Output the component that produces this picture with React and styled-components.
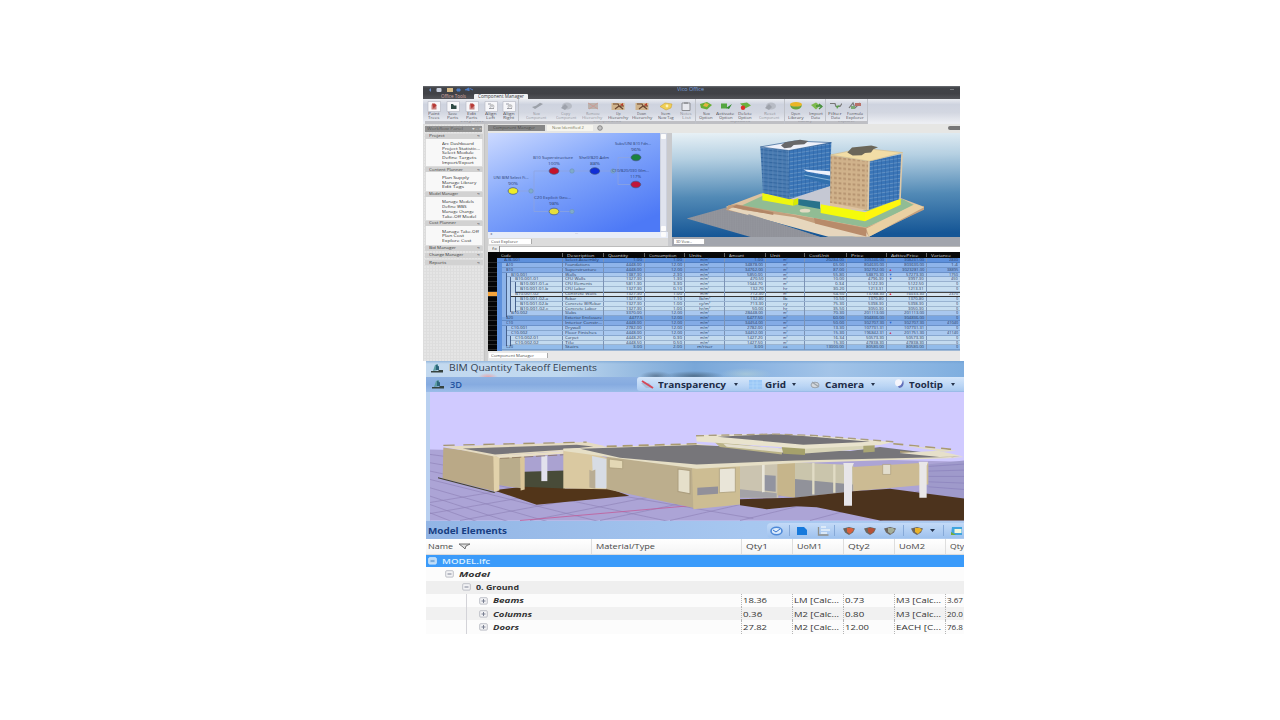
import React, { useLayoutEffect, useRef } from "react";
import styled, { createGlobalStyle } from "styled-components";

const Global = createGlobalStyle`
  * { box-sizing: border-box; }
  body { margin: 0; background: #fff; overflow: hidden; font-family: "Open Sans", "Liberation Sans", sans-serif; }
  svg { display: block; flex: none; }
`;

const Page = styled.main`
  width: 1280px; height: 720px; padding: 86px 0 0 423px;
  display: flex; flex-direction: column; align-items: flex-start;
`;

/* ---------- text squeezed or stretched to a given width ---------- */
const FitBox = styled.span`
  display: block; flex: none; width: ${(p) => p.$w}px; height: ${(p) => p.$s * 1.1}px;
  line-height: ${(p) => p.$s * 1.1}px; font-size: ${(p) => p.$s}px; overflow: visible;
  color: ${(p) => p.$c || "inherit"}; font-weight: ${(p) => p.$b || 400};
  font-style: ${(p) => (p.$i ? "italic" : "normal")};
  > span { display: inline-block; white-space: pre; transform-origin: 0 50%; }
`;
function Fit({ w, s, c, b, i, children }) {
  const ref = useRef(null);
  useLayoutEffect(() => {
    const el = ref.current;
    const natural = el.getBoundingClientRect().width;
    if (natural && !el.style.transform) el.style.transform = `scaleX(${w / natural})`;
  }, [w, s, children]);
  return <FitBox $w={w} $s={s} $c={c} $b={b} $i={i}><span ref={ref}>{children}</span></FitBox>;
}

/* ---------- office window ---------- */
const OfficeWindow = styled.section`
  width: 537px; height: 274.5px; background: #dedede; display: flex; flex-direction: column; overflow: hidden;
`;
const OfficeTitle = styled.header`
  height: 13px; flex: none; display: flex; align-items: flex-start; position: relative;
  background: linear-gradient(#6d7075 0, #414348 14%, #404146 60%, #525358);
  color: #7d93b8;
`;
const QuickIcons = styled.div`
  width: 254px; padding: 0.5px 0 0 5px;
`;
const AppTabs = styled.nav`
  position: absolute; left: 0; bottom: 0; display: flex; align-items: center; height: 5.5px; padding-left: 18px;
`;
const ActiveAppTab = styled.div`
  margin-left: 8px; width: 54px; height: 5.5px; padding-left: 4px; background: #f1f2f4; border-radius: 1px 1px 0 0;
  display: flex; align-items: center;
`;
const TitleMid = styled.div` padding-top: 1px; `;
const TitleMin = styled.div` margin: 3px 6px 0 auto; width: 4px; height: 1px; background: #77797e; `;

const Ribbon = styled.div`
  height: 24.5px; flex: none; display: flex; padding-left: 2px;
  background: linear-gradient(#e9ebf0 0, #ced3df 22%, #d3d7e1 55%, #eceef3 95%);
`;
const RibbonGroup = styled.div`
  width: ${(p) => p.$w}px; display: flex; flex-direction: column; border-right: 1px solid #bfc2c9;
`;
const RibbonItems = styled.div` flex: 1; display: flex; padding-top: 1.5px; `;
const RibbonCaption = styled.div`
  height: 3.5px; background: #bebfc4; display: flex; align-items: center; justify-content: center; overflow: hidden;
`;
const Tool = styled.div`
  width: ${(p) => p.$w}px; flex: none; display: flex; flex-direction: column; align-items: center;
  opacity: ${(p) => (p.$dim ? 0.55 : 1)}; color: #55555b;
  > svg { margin-bottom: 0.3px; }
`;

const OfficeBody = styled.div` flex: 1; display: flex; min-height: 0; `;
const Side = styled.aside`
  width: 62px; flex: none; padding: 2.5px 1px 0 1.5px;
  background-color: #e5e5e5;
  background-image: linear-gradient(90deg, #dddddd 1px, transparent 1px), linear-gradient(#dedede 1px, transparent 1px);
  background-size: 3px 3px; border-right: 1px solid #c4c4c4;
`;
const SideTop = styled.div`
  height: 6px; margin: 0 1px 1.5px 0; background: #929292; display: flex; align-items: center; padding-left: 2px; justify-content: space-between;
`;
const SideSection = styled.div` margin-bottom: ${(p) => (p.$closed ? 2.2 : 0.2)}px; `;
const SideHead = styled.div`
  height: 5px; background: #d2d2d2; display: flex; align-items: center; justify-content: space-between; padding: 0 3px 0 4px; color: #404040;
`;
const SideList = styled.div`
  height: ${(p) => p.$h}px; background: #f8f8f8; padding: 2.4px 0 0 16px; border: 1px solid #dcdcdc; border-top: 0;
`;
const SideItem = styled.div` height: 4.75px; display: flex; align-items: center; color: #2e2e2e; `;

const Main = styled.div` flex: 1; min-width: 0; display: flex; flex-direction: column; padding-left: 3px; background: #cfcfcf; `;
const DocTabs = styled.div` height: 9px; flex: none; display: flex; align-items: center; gap: 2px; background: #e6e6e4; padding-left: 0; `;
const DocTab = styled.div`
  width: ${(p) => p.$w}px; height: 5.5px; padding-left: 5px; display: flex; align-items: center;
  background: ${(p) => (p.$on ? "#f6f5ee" : "#868686")};
`;
const DocEnd = styled.div` margin-left: auto; width: 12px; height: 4px; background: #777; border-radius: 3px 0 0 3px; `;
const Views = styled.div` height: 113px; flex: none; display: flex; gap: 4px; background: #c9cacd; `;
const View = styled.div` width: ${(p) => p.$w}px; display: flex; flex-direction: column; flex: none; `;
const GraphRow = styled.div` display: flex; height: 99px; `;
const VBar = styled.div`
  width: 7px; display: flex; flex-direction: column; justify-content: space-between; align-items: center;
  background: #dfe3ed; border: 1px solid #cdd2de;
`;
const HBar = styled.div` height: 6px; display: flex; justify-content: space-between; align-items: center; background: #e7ecf8; padding: 0 2px; color: #7783a0; `;
const Thumb = styled.i` width: 5px; height: 5px; background: #fcfcfc; border-radius: 1px; `;
const Foot = styled.div` flex: 1; background: ${(p) => p.$bg}; display: flex; align-items: center; padding-left: ${(p) => p.$pl || 1}px; `;
const FootTab = styled.div`
  width: ${(p) => p.$w}px; height: 5.5px; background: #fff; display: flex; align-items: center; padding-left: 2px; border-right: 1px solid #aaa; color: #4b4b4b;
`;
const Formula = styled.div`
  height: 6.7px; flex: none; display: flex; background: #bcbcbc; color: #555; align-items: stretch;
`;
const FormulaFx = styled.div` width: 12px; background: #ececec; padding-left: 4px; border-right: 1px solid #888; `;
const FormulaInput = styled.div` flex: 1; margin-top: 1px; background: #fff; `;

const colTemplate = "66px 41px 41px 40px 40px 41px 39px 42px 40px 40px 34px";
const Sheet = styled.div` display: flex; flex: none; height: 98.4px; background: #9fb8d4; overflow: hidden; `;
const Gutter = styled.div` width: 9px; flex: none; padding-top: 5.8px; background: #050505; `;
const GutterCell = styled.div` height: 4.87px; background: ${(p) => (p.$on ? "#f3a43d" : "#050505")}; border-bottom: 1px solid #2a2a2a; `;
const SheetBody = styled.div` width: 464px; flex: none; `;
const SheetHead = styled.div`
  height: 5.8px; display: grid; grid-template-columns: ${colTemplate}; align-items: center; background: #080808; color: #d8d8d8;
`;
const HeadCell = styled.div` height: 4px; padding-left: 4px; border-right: 1px solid #666; display: flex; align-items: center; `;
const Line = styled.div`
  height: 4.87px; display: grid; grid-template-columns: ${colTemplate}; background: ${(p) => p.$bg};
  border-bottom: 1px solid ${(p) => (p.$sel ? "#333" : "#24447440")};
  box-shadow: ${(p) => (p.$sel ? "inset 0 1px #444" : "none")}; color: #2b3b5c;
`;
const CodeCell = styled.div` display: flex; border-right: 1px solid #6f87aa; `;
const Indent = styled.i` width: 4.8px; flex: none; margin-bottom: -1px; background: ${(p) => p.$bg}; border-right: 1px solid ${(p) => (p.$edge ? "#46618d" : "transparent")}; `;
const CodeInner = styled.div` flex: 1; display: flex; align-items: center; padding-left: ${(p) => p.$pl}px; `;
const Cell = styled.div`
  display: flex; align-items: center; border-right: 1px solid #7c93b5; padding: 0 2px;
  justify-content: ${(p) => p.$a || "flex-end"};
`;
const OfficeFoot = styled.div` flex: 1; display: flex; align-items: center; background: #e8e8e8; padding-left: 1px; `;

/* ---------- takeoff window ---------- */
const Takeoff = styled.section`
  width: 538px; height: 273.5px; margin-left: 3px; display: flex; flex-direction: column; background: #fbfbfb; overflow: hidden;
`;
const TakeTitle = styled.header`
  height: 16px; flex: none; display: flex; align-items: center; padding-left: 5px; gap: 6px; color: #33404f;
  background:
    linear-gradient(#6b9acd88, transparent 18%),
    radial-gradient(ellipse 16px 5px at 230px 15px, #5b7590dd, transparent),
    radial-gradient(ellipse 30px 5px at 268px 15px, #4d6983dd, transparent),
    radial-gradient(ellipse 26px 6px at 320px 13px, #b3cfd8aa, transparent),
    radial-gradient(ellipse 10px 4px at 62px 16px, #f09a9acc, transparent),
    linear-gradient(90deg, #c3d9ef 0, #bfd8ef 25%, #8eb5de 42%, #79a7d8 50%, #8db5e2 62%, #a3c4e8 75%, #7faedf 100%);
`;
const TakeTools = styled.div`
  height: 15.5px; flex: none; display: flex; align-items: center; padding-left: 6px; gap: 6px; color: #15305c;
  background: linear-gradient(#8fb2e2, #86abe0 50%, #9cbde9);
`;
const ToolStrip = styled.div`
  margin-left: auto; width: 327px; height: 14px; display: flex; align-items: center; padding-left: 4px;
  background: linear-gradient(#d5e6fa, #bcd6f5 60%, #a9c9ef); border-radius: 3px 0 0 3px;
`;
const ToolEntry = styled.div` display: flex; align-items: center; width: ${(p) => p.$w}px; flex: none; gap: ${(p) => p.$g}px; `;
const ToolSep = styled.i` width: 1px; height: 12px; background: #98b8df; margin-right: 3px; margin-left: 4px; `;
const Caret = styled.i`
  width: 0; height: 0; border: 2.5px solid transparent; border-top: 3px solid #26344c; border-bottom: 0; margin-left: ${(p) => p.$m || 0}px;
`;
const Scene = styled.div` height: 129px; flex: none; padding-left: 4px; background: #b9d0f0; `;
const ModelBar = styled.div`
  height: 17.5px; flex: none; display: flex; align-items: center; justify-content: space-between; padding: 1px 0 0 2px;
  background: linear-gradient(90deg, #92b5e5, #a7c7f0 60%, #aecbf0);
`;
const IconStrip = styled.div` width: 197px; height: 15px; background: linear-gradient(#c3daf7, #9fc2ee); border-radius: 4px 0 0 4px; `;
const treeCols = "165px 150px 51px 51px 51px 51px 19px";
const TreeHead = styled.div`
  height: 16px; flex: none; display: grid; grid-template-columns: ${treeCols}; background: linear-gradient(#fff, #f4f4f4); border-bottom: 1px solid #dcdcdc; color: #474747;
`;
const TreeHeadCell = styled.div`
  display: flex; align-items: center; gap: 5px; padding: 1.5px 0 0 ${(p) => p.$p ?? 4}px; border-left: ${(p) => (p.$p ? 0 : 1)}px solid #dedede;
`;
const TreeRow = styled.div`
  height: ${(p) => p.$h || 13.3}px; flex: none; display: grid; grid-template-columns: ${treeCols};
  background: ${(p) => p.$bg}; color: ${(p) => (p.$on ? "#d9efff" : "#333")};
`;
const TreeName = styled.div` display: flex; align-items: center; padding-left: ${(p) => p.$in}px; gap: ${(p) => p.$g ?? 6}px; `;
const TreeCell = styled.div` display: flex; align-items: center; border-left: 1px dotted #b5b5b5; padding-left: 1px; `;
const Branch = styled.i` height: 100%; width: 13px; flex: none; border-left: 1px solid #d3d3d8; `;
const NameGap = styled.i` width: 5px; flex: none; `;

/* ---------- data ---------- */
const groups = [
  { w: 94, cap: 24, items: [["Paint", "Trees", 18, "doc"], ["Save", "Parts", 19, "doc2"], ["Edit", "Parts", 19, "doc"], ["Align", "Left", 19, "doc3"], ["Align", "Right", 18, "doc3"]] },
  { w: 177, cap: 28, items: [["New", "Component", 35, "pen", 1], ["Copy", "Component", 24, "copy", 1], ["Remove", "Hierarchy", 29, "box", 1], ["Up", "Hierarchy", 22, "hier"], ["Down", "Hierarchy", 26, "hier"], ["Item", "New Tag", 22, "tag"], ["Notes", "List", 18, "clip", 1]] },
  { w: 89, cap: 20, items: [["New", "Option", 20, "gnew"], ["Activate", "Option", 19, "gact"], ["Delete", "Option", 20, "gdel"], ["Reset", "Component", 29, "copy", 1]] },
  { w: 41, cap: 14, items: [["Open", "Library", 21, "lib"], ["Import", "Data", 19, "imp"]] },
  { w: 42, cap: 17, items: [["Filter", "Data", 18, "fil"], ["Formula", "Explorer", 22, "form"]] },
];
const sections = [
  ["Project", 28.7, ["Arc Dashboard", "Project Statistic...", "Select Module", "Define Targets", "Import/Export"]],
  ["Content Planner", 19.5, ["Plan Supply", "Manage Library", "Edit Tags"]],
  ["Model Manager", 24, ["Manage Models", "Define WBS", "Manage Change", "Take-Off Model"]],
  ["Cost Planner", 19.5, ["Manage Take-Off", "Plan Cost", "Explore Cost"]],
];
const heads = ["Code", "Description", "Quantity", "Consumption", "Units", "Amount", "Unit", "CostUnit", "Price", "AdtivePrice", "Variance"];
const rows = [
  [0, "A-B-001", "Select Assembly", "1.00", "1.00", "m/m²", "1.00", "m²", "20284.00", "309246.00", "308231.00", "2830", "#5d90dc"],
  [1, "A10", "Foundations", "4448.00", "12.00", "m/m²", "34878.00", "m²", "65.00", "804630.00", "803630.00", "1.4", "#8eb4ea"],
  [1, "B10", "Superstructure", "4448.00", "12.00", "m/m²", "34762.00", "m²", "87.00", "302702.00", "3023281.00", "38895", "#83abe6"],
  [2, "B10.001", "Walls", "1387.30", "2.30", "m/m²", "5850.00", "m²", "55.80", "58870.30", "57273.30", "1750", "#a9c8ef"],
  [3, "B10.001.01", "CFU Walls", "1327.30", "1.30", "m/m²", "470.50", "m²", "10.00", "4796.30", "3997.30", "450", "#bfd6ee"],
  [4, "B10.001.01.a", "CFU Elements", "5811.30", "3.30", "m/m²", "1044.70", "m²", "0.34", "5122.30", "5122.50", "0", "#c7def0"],
  [4, "B10.001.01.b", "CFU Labor", "1327.30", "0.10", "m/m²", "132.70", "hr", "30.20", "1213.31", "1213.31", "0", "#c7def0"],
  [3, "B10.001.02", "Concrete Walls", "1327.30", "1.00", "m/m²", "712.30", "m²", "54.50", "13788.30", "16033.30", "2370", "#d6e4ef"],
  [4, "B10.001.02.a", "Rebar", "1327.30", "1.10", "lb/m²", "132.80", "lb", "10.50", "1370.80", "1370.80", "0", "#bfd9f0"],
  [4, "B10.001.02.b", "Concrete W/Rebar", "1327.30", "1.00", "cy/m²", "713.30", "cy", "75.30", "5398.30", "5398.30", "0", "#c7def0"],
  [4, "B10.001.02.c", "Concrete Labor", "1327.30", "1.00", "hr/m²", "50.00", "hr", "35.50", "3050.30", "3050.30", "0", "#c7def0"],
  [2, "B10.002", "Slabs", "3370.00", "12.00", "m/m²", "28448.00", "m²", "70.30", "201113.00", "201113.00", "0", "#a9c8ef"],
  [1, "B20", "Exterior Enclosure", "4477.5", "12.00", "m/m²", "6477.50", "m²", "60.00", "304836.00", "304836.00", "0", "#78a5e2"],
  [1, "C10", "Interior Constr...", "4448.00", "12.00", "m/m²", "34454.00", "m²", "50.00", "302707.30", "302707.30", "41040", "#83abe6"],
  [2, "C10.001", "Drywall", "2782.00", "12.00", "m/m²", "2782.00", "m²", "13.30", "107731.31", "107731.31", "0", "#a9c8ef"],
  [2, "C10.002", "Floor Finishes", "4448.00", "12.00", "m/m²", "34452.00", "m²", "15.30", "196842.31", "201751.30", "41140", "#a9c8ef"],
  [3, "C10.002.01", "Carpet", "4448.20", "0.30", "m/m²", "1427.20", "m²", "16.34", "50573.30", "50573.30", "0", "#c3daef"],
  [3, "C10.002.02", "Tile", "4448.50", "0.50", "m/m²", "1427.50", "m²", "15.30", "47838.30", "47838.30", "0", "#c3daef"],
  [1, "C20", "Stairs", "3.00", "2.00", "m/riser", "3.00", "ea", "13000.00", "80580.00", "80580.00", "0", "#92bbea"],
];
const levelColors = ["#5d90dc", "#8bb2e9", "#abc9ee", "#c3d9ee"];
const marks = { 2: "#c33a52", 3: "#1d5fd0", 4: "#1d5fd0", 7: "#d82a2a", 13: "#1d5fd0", 15: "#c33a52" };

/* ---------- drawings ---------- */
function RibbonIcon({ k }) {
  const paper = <path d="M1 .5h12.500v10H1z" fill="#f7f7fa" stroke="#b9bcc6" strokeWidth=".7" />;
  const art = {
    doc: <>{paper}<path d="M4.500 3.500h5v5h-5z" fill="#c98280" /><path d="M5 2.600h3l1.500 2-3 3z" fill="#b73b37" /></>,
    doc2: <>{paper}<path d="M5 3h2l1 1.500h2.500V8H5z" fill="#2f4b45" /></>,
    doc3: <>{paper}<path d="M4 3h3M6.500 5h3M5 7.500h5" stroke="#999ba7" /><circle cx="8" cy="5.500" r="2" fill="none" stroke="#b2b1ae" strokeWidth=".7" /></>,
    pen: <path d="M2 6l3 2 8-5-3-1.200-4 3z" fill="#73787d" />,
    copy: <><ellipse cx="8" cy="5" rx="5" ry="3.600" fill="#a5a9b0" /><path d="M2 7l4-4 3 3-3 3z" fill="#777b82" /></>,
    box: <><path d="M2 2h10v6H2z" fill="#aa9887" /><path d="M2 2l10 6M12 2L3 8" stroke="#c2705d" /></>,
    hier: <><path d="M.5 2h13v7H.5z" fill="#d0b48c" /><path d="M2 3h5l1 2h5M4 8l4-3 4 3" stroke="#6a4630" fill="none" strokeWidth="1.200" /><path d="M9 4l3-2v3z" fill="#b63a2b" /></>,
    tag: <><path d="M1 5.500L6 2l7 1-1 4-5 2z" fill="#efcf57" stroke="#c69a2c" strokeWidth=".5" /><circle cx="8" cy="5" r="1.400" fill="#fff2ba" /></>,
    clip: <><path d="M3 2h8v7.500H3z" fill="#fafafa" stroke="#555" /><path d="M5 1h4v2H5z" fill="#666" /></>,
    gnew: <><path d="M1 3l7-2 5 3-5 4.500L2 7z" fill="#68ae36" /><path d="M6 2l4 1-2 3-4-1z" fill="#e3b43f" /></>,
    gact: <><path d="M2 2.500h6v5H2z" fill="#54a640" /><path d="M7 7l6-4-3 5z" fill="#328a30" /></>,
    gdel: <><path d="M2 2.500l7-1 4 3-6 3z" fill="#6bb13f" /><circle cx="5" cy="6.700" r="2.200" fill="#df3028" /></>,
    lib: <><ellipse cx="7" cy="3.500" rx="6" ry="2.400" fill="#eab526" /><path d="M1 4c1 6 11 6 12 0-2 2-10 2-12 0z" fill="#6aa43b" /></>,
    imp: <><path d="M2 4l5-2.500 4 3-4 4z" fill="#7db94d" /><path d="M7 5h6M10 3l3 2.500L10 8" stroke="#47903c" fill="none" strokeWidth="1.300" /></>,
    fil: <><path d="M2 2.500h5l1 3h4l2-3" fill="none" stroke="#777" strokeWidth="1.200" /><path d="M8 5l4-1-3 4z" fill="#5b9f4d" /></>,
    form: <><path d="M1 7l4-5 2 5 5-5" fill="none" stroke="#777" strokeWidth="1.200" /><path d="M7 2h6v3H7z" fill="#b87068" /><path d="M3 5h4v3H3z" fill="#7aa973" /></>,
  };
  return <svg width="14" height="11" viewBox="0 0 14 11">{art[k]}</svg>;
}

function GraphText({ x, y, w, children }) {
  return <text x={x} y={y} textLength={w} lengthAdjust="spacingAndGlyphs" fontSize="4.2" fill="#2c3f73" fontFamily="Open Sans">{children}</text>;
}
function Graph() {
  const link = { fill: "none", stroke: "#8fa5dc", strokeWidth: 0.7 };
  return (
    <svg width="172" height="99" viewBox="488 133.5 172 99">
      <defs>
        <linearGradient id="gb" x1="0" y1="0" x2=".75" y2="1">
          <stop offset="0" stopColor="#cddaff" /><stop offset=".45" stopColor="#86a9fb" /><stop offset="1" stopColor="#4d79f6" />
        </linearGradient>
      </defs>
      <rect x="488" y="133" width="172" height="100" fill="url(#gb)" />
      <path {...link} d="M518 191.5h16M534 171.5v40.5h16M534 171.5h16M559 171.5h30M600 171.5h18M618 158h13M618 158v27h13M559 212h13" />
      {[[531, 191.5], [572, 171.5], [613, 171.5], [572, 212]].map(([x, y]) => <circle key={x + "-" + y} cx={x} cy={y} r="2.200" fill="#80abc9" stroke="#6b92ba" strokeWidth=".6" />)}
      {[[513, 191.5, "#efed28"], [554, 171.5, "#c5122b"], [594.8, 171.5, "#102fd6"], [636, 158, "#1a8240"], [635.8, 185, "#c0163b"], [554, 212, "#e6df3c"]].map(([x, y, c]) => (
        <ellipse key={x + c} cx={x} cy={y} rx="4.900" ry="3.300" fill={c} stroke="#3f5583" strokeWidth=".7" />
      ))}
      <GraphText x="493.500" y="179.500" w={35}>UNI BIM Select Fi...</GraphText><GraphText x="508" y="185.500" w={10}>90%</GraphText>
      <GraphText x="533" y="159" w={40}>B10 Superstructure</GraphText><GraphText x="548" y="165" w={12}>100%</GraphText>
      <GraphText x="579" y="159" w={30}>Shell/B20 Adm</GraphText><GraphText x="590" y="165" w={10}>88%</GraphText>
      <GraphText x="615" y="145.500" w={36}>Subs/UNI B10 Fdn...</GraphText><GraphText x="631" y="151.500" w={10}>96%</GraphText>
      <GraphText x="612" y="172.500" w={37}>C10/B20/030 Glm...</GraphText><GraphText x="630" y="178.500" w={11}>117%</GraphText>
      <GraphText x="534" y="199.500" w={37}>C20 Explicit Geo...</GraphText><GraphText x="549" y="205.500" w={10}>98%</GraphText>
    </svg>
  );
}

function Towers() {
  return (
    <svg width="288" height="104.500" viewBox="21 6 864 315" preserveAspectRatio="none">
      <defs>
        <linearGradient id="sky" x1="0" y1="0" x2=".05" y2="1">
          <stop offset="0" stopColor="#e8f1f6" /><stop offset=".25" stopColor="#b5d0e2" /><stop offset=".62" stopColor="#528ab6" /><stop offset="1" stopColor="#155696" />
        </linearGradient>
        <pattern id="floors" width="14" height="12" patternUnits="userSpaceOnUse" patternTransform="skewY(6)">
          <rect width="14" height="12" fill="#4a7cb2" /><path d="M0 2h14" stroke="#2f639c" strokeWidth="3" /><path d="M2 0v12" stroke="#668fba" strokeWidth="1.500" />
        </pattern>
        <pattern id="side" width="12" height="12" patternUnits="userSpaceOnUse" patternTransform="skewY(-8)">
          <rect width="12" height="12" fill="#3a75b7" /><path d="M0 1h12" stroke="#6b98c8" strokeWidth="2.500" /><path d="M1 0v12" stroke="#2a609f" strokeWidth="1.500" />
        </pattern>
        <pattern id="win" width="14" height="15" patternUnits="userSpaceOnUse" patternTransform="skewY(5)">
          <rect width="14" height="15" fill="#d0b28b" /><rect x="3" y="4" width="8" height="6" fill="#b4926f" />
        </pattern>
        <pattern id="mesh" width="7" height="6" patternUnits="userSpaceOnUse"><rect width="7" height="6" fill="#8f9098" /><path d="M0 0h7M0 0v6" stroke="#9fa1a7" /></pattern>
      </defs>
      <rect x="21" y="6" width="864" height="315" fill="url(#sky)" />
      <path d="M65 264L186 230L470 321H262z" fill="url(#mesh)" />
      <path d="M183 228L288 188L707 202L777 228L776 235L612 319L470 300L190 236z" fill="#dec3a0" />
      <path d="M222 228L292 196L560 250L712 205L748 224L604 291L390 252z" fill="#91bc94" />
      <path d="M190 224L214 221L602 291L777 226V237L605 319H572L183 238z" fill="#c49f7d" />
      <path d="M190 237L205 229L235 238L390 260L450 278L600 301L612 319H490L330 275z" fill="#e6d6bd" />
      <path d="M262 321L470 321L330 275L250 250z" fill="url(#mesh)" />
      <path d="M447 262L604 294V318L450 279z" fill="#b88b6a" />
      <path d="M604 294L750 220L777 230L612 319z" fill="#ead0a2" />
      <path d="M215 222l110 23v8L200 230z" fill="#b28667" />
      <path d="M370 200L495 166V230L610 242V250L470 228L385 205z" fill="#c5c8d3" />
      <path d="M292 187L385 207V225L292 209z" fill="#eef70f" />
      <path d="M385 207l15-5v18l-15 5z" fill="#d7ea00" />
      <path d="M400 205L465 213V235L400 223z" fill="#28738b" />
      <path d="M467 221L600 245V272L467 247z" fill="#f5fb0b" />
      <path d="M600 245L707 203V222L600 272z" fill="#fff60e" />
      <ellipse cx="420" cy="240" rx="16" ry="6" fill="#e2dbc3" />
      <path d="M286 49L371 58L373 206L294 187z" fill="url(#floors)" />
      <path d="M371 58L499 35L495 166L373 206z" fill="url(#side)" />
      <path d="M286 48L390 30L499 35L371 59z" fill="#eef1fa" stroke="#27568c" strokeWidth="2" />
      <path d="M348 44l12-10 45-8 25 4-12 10-32 2-8 8-20 2z" fill="#68686a" />
      <path d="M415 116L495 121V134L428 123z" fill="#edf1fc" />
      <path d="M418 125L495 137V163L418 141z" fill="#3170ae" /><path d="M418 133l77 15" stroke="#86b2d8" strokeWidth="3" />
      <path d="M497 73L612 91L609 238L495 216z" fill="url(#win)" />
      <path d="M612 91L711 69L707 204L609 238z" fill="url(#side)" />
      <path d="M497 72L595 52L713 65L613 91z" fill="#f2dda6" stroke="#d5bd8c" strokeWidth="2" />
      <path d="M612 91L609 238M711 68L705 205" stroke="#dcc9a9" strokeWidth="5" />
      <path d="M547 65l14-15 58-6 20 5-14 6-7 10-18 1-10 7-27 1z" fill="#6b6659" />
    </svg>
  );
}

function House() {
  const across = [];
  for (let i = 0; i < 9; i++) across.push(`M${-300 + i * 210} 498L${330 + i * 175} 395`);
  const down = [];
  for (let i = 0; i < 9; i++) down.push(`M30 ${300 + i * 25}L1000 ${430 + i * 62}`);
  return (
    <svg width="534" height="128.500" viewBox="30 113 1602 385" preserveAspectRatio="none">
      <rect x="30" y="113" width="1602" height="385" fill="#d0caff" />
      <path d="M30 285L1632 322V498H30z" fill="#aca4d6" />
      <path d={across.join("") + down.join("")} stroke="#8f83b8" strokeWidth="2" fill="none" />
      <path d="M300 498L830 452" stroke="#c05f9b" strokeWidth="2.500" fill="none" />
      <path d="M1520 330L1632 318V440L1500 420z" fill="#9f9acb" />
      <path d="M1525 336l107-7M1525 350l107-3M1525 366l107 0M1525 382l107 4M1525 397l107 8" stroke="#8a81bb" strokeWidth="2" />
      {/* garage */}
      <path d="M310 300h125v105H310z" fill="#aaa2d1" />
      <path d="M312 352L435 348V405L312 404z" fill="#484b38" />
      <path d="M364 304h18v76h-18z" fill="#e2e1ed" />
      <path d="M220 407L310 397L430 402L560 400L628 424L350 451z" fill="#523519" />
      <path d="M236 310L310 300V402L236 392z" fill="#b9ac8b" />
      <path d="M70 279L228 302L230 412L68 372z" fill="#baa987" />
      <path d="M220 305L238 306V408L222 412z" fill="#e2d2ab" />
      <path d="M300 308L314 306V405L302 408z" fill="#dac69a" />
      <path d="M70 276L500 263L560 276L470 286L222 306z" fill="#e5dbc2" />
      <path d="M128 282L470 271L520 276L430 286L225 300z" fill="#77757a" />
      <path d="M70 273L500 263" stroke="#a49570" strokeWidth="4" strokeDasharray="34 26" />
      <path d="M228 304L430 290L432 298L240 312z" fill="#e9dfc6" /><path d="M240 312l192-11" stroke="#80664e" strokeWidth="2" strokeDasharray="28 8" />
      <path d="M54 370l170 44" stroke="#41402e" strokeWidth="3" />
      {/* left wing */}
      <path d="M430 284L530 300L565 312L560 404L430 402z" fill="#dac9a1" />
      <path d="M516 305L560 314V402L520 400z" fill="#d7dce4" /><path d="M516 350l10-5v58l-18-4v-53z" fill="#b9ad94" />
      <path d="M560 302L830 332V462L560 404z" fill="#bcae8d" />
      <path d="M568 314l40 5v24l-40-3z" fill="#e3d8b5" stroke="#a69875" strokeWidth="2" />
      <path d="M774 344l36 4v70l-36-7z" fill="#e5dfca" stroke="#ab9d7e" strokeWidth="3" />
      <path d="M816 340L960 330V450L820 464z" fill="#cdbd93" />
      <path d="M832 400l62-4v22l-62 4z" fill="#92909a" /><path d="M898 343l48-3v72l-48 3z" fill="#e9e5d8" stroke="#b5a886" strokeWidth="3" />
      {/* centre */}
      <path d="M960 330L1075 322V430L960 430z" fill="#cbc4b0" /><path d="M960 404l110 12v14h-110z" fill="#a3a2a7" />
      <path d="M1032 362l35 2v48l-35-4z" fill="#9294a0" /><path d="M1026 325h8v88h-8z" fill="#e9e6da" />
      <path d="M1072 328L1125 322V430L1072 422z" fill="#c6b58b" />
      <path d="M1125 324L1300 332V410L1125 430z" fill="#cac5ac" /><path d="M1125 374L1298 390V410L1125 430z" fill="#91929a" />
      <path d="M1180 325v95M1243 330v85" stroke="#e1dcc5" strokeWidth="7" />
      <path d="M1298 338L1525 324V390L1300 410z" fill="#ccbb93" /><path d="M1388 330h24v30h-24z" fill="#e2ddcd" stroke="#aa9b79" strokeWidth="2" />
      <path d="M960 434L1120 430L1300 410L1410 403L1632 432V498H1380L1190 458L1130 455L1040 464L960 452z" fill="#4c331d" />
      {/* roof planes */}
      <path d="M430 282L560 278L830 268L980 286L1632 310L1130 326L830 343L430 290z" fill="#e6dfc6" />
      <path d="M480 283L830 272L1000 280L1290 290L1380 278L1620 307L1130 318L830 330L600 310z" fill="#77767a" />
      <path d="M560 276l270-8M1420 268l185 18M1440 292l160 14" stroke="#a99a71" strokeWidth="5" strokeDasharray="30 18" />
      <path d="M880 260L1000 275L1090 285L1085 300L900 278z" fill="#bbb488" />
      <path d="M910 268L1090 282V294L920 277z" fill="#e4dfcf" />
      <path d="M1085 278L1155 278V302L1090 298z" fill="#a5a16b" /><path d="M1155 281L1340 272V284L1155 297z" fill="#d8d4b8" /><path d="M1330 272l34-2v22l-34 2z" fill="#aaa674" />
      <path d="M828 242L1060 238L1180 243L1420 263L1380 272L1155 283L830 261z" fill="#e9e3cd" />
      <path d="M892 247L1065 239L1170 246L1350 262L1150 271z" fill="#747277" />
      <path d="M828 244L1065 239L1180 243L1420 262" fill="none" stroke="#a99d7e" strokeWidth="4" strokeDasharray="24 14" />
      <path d="M1438 296l120 12 72-2-75-17z" fill="#e6e0ca" /><path d="M1440 272l170 17-40 3z" fill="#e2dcc4" />
      {/* columns */}
      <path d="M1270 326h32l-6 12v116h-24V338z" fill="#e7e5e9" /><path d="M1496 322h28l-4 12v96h-22v-98z" fill="#e9e7e8" />
    </svg>
  );
}

const Crane = () => (
  <svg width="12" height="11" viewBox="0 0 12 11"><path d="M2 8L4 2l3-1v6z" fill="#5d9da2" /><path d="M5 1.500l3 2v3.500H5z" fill="#2d657c" /><path d="M0 8h7l1-1h4v2.500H0z" fill="#36423e" /></svg>
);
const TreeBox = ({ plus, light }) => (
  <svg width="9" height="8" viewBox="0 0 9 8"><rect x=".7" y=".7" width="7.600" height="6.400" rx="1" fill={light ? "#b8d8f5" : "#f3f3f5"} stroke={light ? "#e1f0fd" : "#b0b2bb"} strokeWidth=".8" /><path d={plus ? "M2.500 4h4M4.500 2v4" : "M2.500 4h4"} stroke={light ? "#3778bb" : "#70778a"} strokeWidth=".9" /></svg>
);

const treeData = [
  ["Beams", 31, "18.36", "LM [Calc...", "0.73", "M3 [Calc...", "3.67"],
  ["Columns", 39, "0.36", "M2 [Calc...", "0.80", "M3 [Calc...", "20.0"],
  ["Doors", 26, "27.82", "M2 [Calc...", "12.00", "EACH [C...", "76.8"],
];

export default function App() {
  return (
    <Page>
      <Global />
      <OfficeWindow>
        <OfficeTitle>
          <QuickIcons>
            <svg width="60" height="6" viewBox="0 0 60 6"><path d="M1 3l2-2v4z" fill="#6d8fc9" /><rect x="8.500" y="1" width="5" height="4" rx="1" fill="#c9d0de" /><rect x="19" y="1" width="6" height="4" fill="#d9bb86" /><path d="M29 2h3v2h-3zM37 3l4-2v3M45 3l-3-1.500" stroke="#4d7cc6" fill="#4d7cc6" /></svg>
          </QuickIcons>
          <TitleMid><Fit w={27} s={4.600} c="#7ba0df">Vico Office</Fit></TitleMid>
          <TitleMin />
          <AppTabs>
            <Fit w={25} s={4.400} c="#d4a9a2">Office Tools</Fit>
            <ActiveAppTab><Fit w={46} s={4.400} c="#303238">Component Manager</Fit></ActiveAppTab>
          </AppTabs>
        </OfficeTitle>
        <Ribbon>
          {groups.map((g, gi) => (
            <RibbonGroup key={gi} $w={g.w}>
              <RibbonItems>
                {g.items.map(([a, b, w, k, dim], i) => (
                  <Tool key={i} $w={w} $dim={dim}>
                    <RibbonIcon k={k} /><Fit w={a.length * 2.300} s={4}>{a}</Fit><Fit w={b.length * 2.250} s={4}>{b}</Fit>
                  </Tool>
                ))}
              </RibbonItems>
              <RibbonCaption><Fit w={g.cap} s={3.200} c="#95969c">{["Layout", "Components", "Options", "Library", "Explorer"][gi]}</Fit></RibbonCaption>
            </RibbonGroup>
          ))}
        </Ribbon>
        <OfficeBody>
          <Side>
            <SideTop><Fit w={36} s={4} c="#5f5f5f">Workflow Panel</Fit><Fit w={10} s={4} c="#ddd">▾ ₊ ×</Fit></SideTop>
            {sections.map(([name, h, items]) => (
              <SideSection key={name}>
                <SideHead><Fit w={name.length * 2.250} s={4.200}>{name}</Fit><Fit w={3} s={4}>≈</Fit></SideHead>
                <SideList $h={h}>
                  {items.map((t) => <SideItem key={t}><Fit w={Math.min(38, t.length * 2.450)} s={4.300}>{t}</Fit></SideItem>)}
                </SideList>
              </SideSection>
            ))}
            {["Bid Manager", "Change Manager", "Reports"].map((t) => (
              <SideSection key={t} $closed><SideHead><Fit w={t.length * 2.450} s={4.200}>{t}</Fit><Fit w={3} s={4}>≈</Fit></SideHead></SideSection>
            ))}
          </Side>
          <Main>
            <DocTabs>
              <DocTab $w={57}><Fit w={42} s={4} c="#4a4a4a">Component Manager</Fit></DocTab>
              <DocTab $w={46} $on><Fit w={32} s={4} c="#79795e">New Identified 2</Fit></DocTab>
              <svg width="9" height="6" viewBox="0 0 9 6"><circle cx="5" cy="3" r="2.300" fill="#c1c1c1" stroke="#777" strokeWidth=".8" /></svg>
              <DocEnd />
            </DocTabs>
            <Views>
              <View $w={180}>
                <GraphRow><Graph /><VBar><Thumb /><Thumb /></VBar></GraphRow>
                <HBar><Fit w={2} s={4}>◂</Fit><Fit w={3} s={4}>···</Fit><Thumb /></HBar>
                <Foot $bg="#dcdcdc"><FootTab $w={43}><Fit w={27} s={4.300}>Cost Explorer</Fit></FootTab></Foot>
              </View>
              <View $w={288}>
                <Towers />
                <Foot $bg="#a2a5ad" $pl={2}><FootTab $w={31}><Fit w={16} s={4.300}>3D View...</Fit></FootTab></Foot>
              </View>
            </Views>
            <Formula><FormulaFx><Fit w={5} s={4.300}>fx</Fit></FormulaFx><FormulaInput /></Formula>
            <Sheet>
              <Gutter>{rows.map((_, i) => <GutterCell key={i} $on={i === 7} />)}</Gutter>
              <SheetBody>
                <SheetHead>{heads.map((t) => <HeadCell key={t}><Fit w={t.length * 2.500} s={4.300}>{t}</Fit></HeadCell>)}</SheetHead>
                {rows.map((r, i) => (
                  <Line key={i} $bg={r[12]} $sel={i === 7}>
                    <CodeCell>
                      {levelColors.slice(0, r[0]).map((c, n) => <Indent key={c} $bg={c} $edge={n > 0} />)}
                      <CodeInner $pl={r[0] ? 4 : 7}><Fit w={r[1].length * 2.350} s={4}>{r[1]}</Fit></CodeInner>
                    </CodeCell>
                    <Cell $a="flex-start"><Fit w={Math.min(37, r[2].length * 2.250)} s={4}>{r[2]}</Fit></Cell>
                    {[3, 4, 5, 6, 7, 8, 9, 10, 11].map((n) => (
                      <Cell key={n} $a={n === 5 || n === 7 ? "center" : n === 10 ? "space-between" : "flex-end"}>
                        {n === 10 && <Fit w={3} s={4} c={marks[i] || "transparent"}>{marks[i] === "#1d5fd0" ? "▼" : "▲"}</Fit>}
                        <Fit w={r[n].length * 2.250} s={4}>{r[n]}</Fit>
                      </Cell>
                    ))}
                  </Line>
                ))}
              </SheetBody>
            </Sheet>
            <OfficeFoot><FootTab $w={59}><Fit w={43} s={4.300}>Component Manager</Fit></FootTab></OfficeFoot>
          </Main>
        </OfficeBody>
      </OfficeWindow>

      <Takeoff>
        <TakeTitle><Crane /><Fit w={148} s={9.300}>BIM Quantity Takeoff Elements</Fit></TakeTitle>
        <TakeTools>
          <Crane />
          <Fit w={12} s={8.300} c="#2454a0" b={600}>3D</Fit>
          <ToolStrip>
            <ToolEntry $w={108} $g={4}>
              <svg width="13" height="9" viewBox="0 0 13 9"><path d="M0 3h8l4 5H5z" fill="#a9bdd9" /><path d="M1 1l11 7" stroke="#d54859" strokeWidth="2" /></svg>
              <Fit w={68} s={8.300} b={700} c="#1d2c47">Transparency</Fit><Caret $m={4} />
            </ToolEntry>
            <ToolEntry $w={61} $g={3}>
              <svg width="13" height="9" viewBox="0 0 13 9"><rect width="13" height="9" fill="#9bc8f7" /><path d="M0 3h13M0 6h13M4 0v9M8 0v9" stroke="#b9dbfb" strokeWidth=".6" /></svg>
              <Fit w={21} s={8.300} b={700} c="#1d2c47">Grid</Fit><Caret $m={3} />
            </ToolEntry>
            <ToolEntry $w={77} $g={4}>
              <svg width="11" height="9" viewBox="0 0 11 9"><ellipse cx="5" cy="5" rx="4" ry="2.800" fill="#d4d8dc" stroke="#9aa2aa" /><path d="M2 2l7 5" stroke="#9ba3ab" strokeWidth="1.300" /></svg>
              <Fit w={39} s={8.300} b={700} c="#1d2c47">Camera</Fit><Caret $m={3} />
            </ToolEntry>
            <ToolSep />
            <ToolEntry $w={70} $g={4}>
              <svg width="11" height="10" viewBox="0 0 11 10"><circle cx="4.500" cy="3.800" r="3.500" fill="#f5f5fc" /><path d="M9 1c2 5-1 8-4 8l-1-2c2 0 4-1 5-6z" fill="#626fb9" /></svg>
              <Fit w={34} s={8.300} b={700} c="#1d2c47">Tooltip</Fit><Caret $m={4} />
            </ToolEntry>
          </ToolStrip>
        </TakeTools>
        <Scene><House /></Scene>
        <ModelBar>
          <Fit w={79} s={8.300} b={700} c="#173e83">Model Elements</Fit>
          <IconStrip>
            <svg width="197" height="15" viewBox="767 523 197 15">
              <path d="M789.500 525v11M834.500 525v11M903.500 525v11M943.500 525v11" stroke="#86a9d8" />
              <ellipse cx="776.500" cy="531" rx="5.500" ry="3.800" fill="#ddecfc" stroke="#4e89d8" strokeWidth="1.600" /><path d="M773 530l3 2 4-3" fill="none" stroke="#3774cd" />
              <path d="M797 527h7l3 3v5h-10z" fill="#1679dc" />
              <path d="M818.500 527v8h10" fill="none" stroke="#8f8f89" strokeWidth="1.300" /><path d="M821 527h5M821 530h9M821 533h6" stroke="#e8f1f9" strokeWidth="1.500" />
              {[[849, "#d8603c"], [870, "#b45136"], [890, "#a4ae9a"], [917, "#e9b329"]].map(([x, c]) => (
                <g key={x}><path d={`M${x - 6} 528.500l6-1.500 6 1.500-2 4-4 2.500-4-2.500z`} fill="#6d665e" /><path d={`M${x - 2} 528h5l2 2-4 4-3-2z`} fill={c} /></g>
              ))}
              <path d="M930 529h5l-2.500 3z" fill="#24344f" />
              <path d="M952 527h10v8h-11z" fill="#41a5df" /><path d="M954.500 529h7v4h-7z" fill="#f1f7dc" /><path d="M951 532l5 3h-5z" fill="#79ac36" />
            </svg>
          </IconStrip>
        </ModelBar>
        <TreeHead>
          <TreeHeadCell $p={2}><Fit w={25} s={7.800}>Name</Fit><svg width="13" height="7" viewBox="0 0 13 7"><path d="M1 1h11L8 3 7 6 5 4z" fill="#ddd" stroke="#666" strokeWidth=".9" /></svg></TreeHeadCell>
          {[["Material/Type", 59], ["Qty1", 22], ["UoM1", 25], ["Qty2", 22], ["UoM2", 26], ["Qty", 14]].map(([t, w]) => <TreeHeadCell key={t}><Fit w={w} s={7.800}>{t}</Fit></TreeHeadCell>)}
        </TreeHead>
        <TreeRow $bg="#3b9bfa" $on $h={12.800}><TreeName $in={2} $g={5}><TreeBox light /><Fit w={48} s={7.800} b={600}>MODEL.ifc</Fit></TreeName></TreeRow>
        <TreeRow $bg="#fcfcfc"><TreeName $in={19} $g={5}><TreeBox /><Fit w={31} s={7.800} b={700} i>Model</Fit></TreeName></TreeRow>
        <TreeRow $bg="#efefef"><TreeName $in={36} $g={5}><TreeBox /><Fit w={43} s={7.800} b={700}>0. Ground</Fit></TreeName></TreeRow>
        {treeData.map(([n, w, ...v], i) => (
          <TreeRow key={n} $bg={i === 1 ? "#f1f1f1" : "#fcfcfc"}>
            <TreeName $in={40} $g={0}><Branch /><TreeBox plus /><NameGap /><Fit w={w} s={7.800} b={700} i>{n}</Fit></TreeName>
            <span />
            {v.map((t, k) => <TreeCell key={k}><Fit w={k === 1 || k === 3 ? 45 : k === 4 ? 16 : t.length * 4.800} s={7.400}>{t}</Fit></TreeCell>)}
          </TreeRow>
        ))}
      </Takeoff>
    </Page>
  );
}
